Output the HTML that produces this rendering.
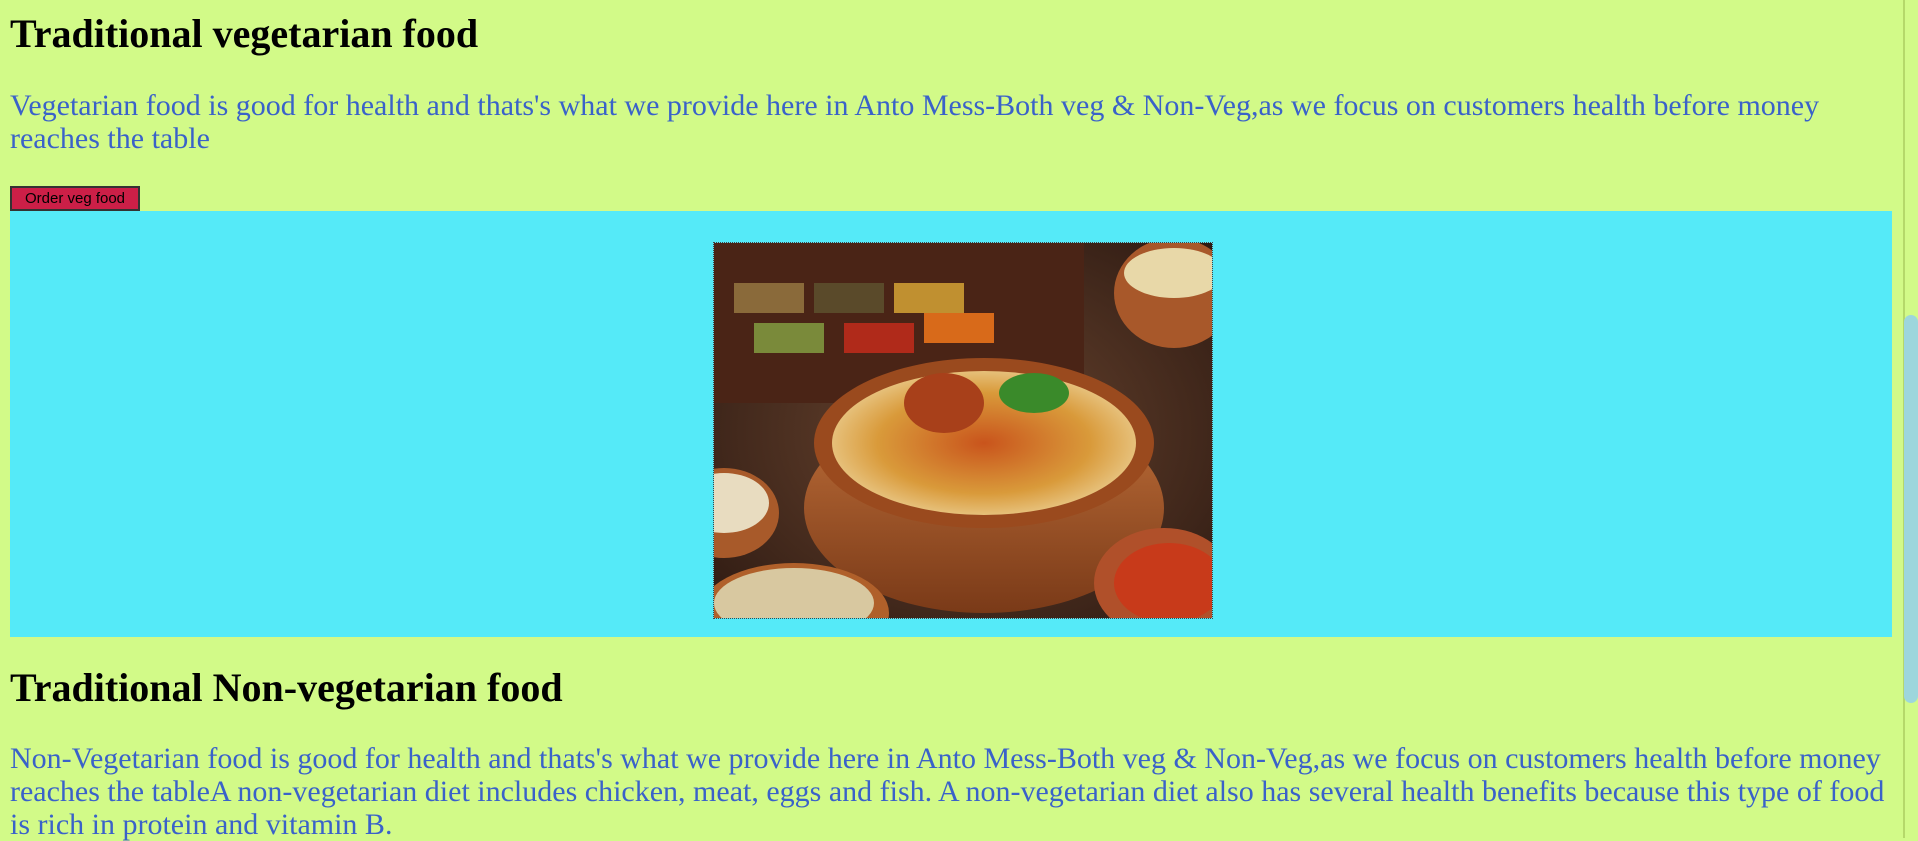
<!DOCTYPE html>
<html><head><meta charset="utf-8"><style>
html,body{margin:0;padding:0;}
body{background:#d2fa88;width:1918px;height:838px;overflow:hidden;position:relative;font-family:"Liberation Serif",serif;}
.wrap{position:absolute;left:10px;top:0;width:1882px;}
h1{font-size:40px;line-height:46px;margin:0;font-weight:bold;color:#000;}
p{font-size:30px;line-height:33px;color:#3a62c9;margin:0;}
button{display:block;margin:31px 0 0;height:25px;width:130px;padding:0;background:#cc1f47;border:2px solid #333;font-family:"Liberation Sans",sans-serif;font-size:15px;color:#000;}
.box{background:#55eaf8;height:426px;position:relative;}
.img{position:absolute;left:703px;top:31px;width:500px;height:377px;border:1px dotted #444;box-sizing:border-box;overflow:hidden;}
.sb{position:absolute;left:1903px;top:0;width:15px;height:838px;background:#d2fa88;border-left:2px solid #b5d86a;box-sizing:border-box;}
.th{position:absolute;left:1904px;top:315px;width:14px;height:388px;background:#9dd6dc;border-radius:7px;}
</style></head><body>
<div class="wrap">
<h1 style="margin-top:11px">Traditional vegetarian food</h1>
<p style="margin-top:32px">Vegetarian food is good for health and thats's what we provide here in Anto Mess-Both veg &amp; Non-Veg,as we focus on customers health before money reaches the table</p>
<button>Order veg food</button>
<div class="box"><div class="img">
<svg width="500" height="377" viewBox="0 0 500 377">
<defs><radialGradient id="bg" cx="0.5" cy="0.5" r="0.7"><stop offset="0" stop-color="#6b4630"/><stop offset="1" stop-color="#2e1a12"/></radialGradient>
<radialGradient id="rice" cx="0.5" cy="0.5" r="0.5"><stop offset="0" stop-color="#c9541c"/><stop offset="0.7" stop-color="#d99a3a"/><stop offset="1" stop-color="#e6c07a"/></radialGradient>
<linearGradient id="pot" x1="0" y1="0" x2="0" y2="1"><stop offset="0" stop-color="#c0703a"/><stop offset="1" stop-color="#7a3a18"/></linearGradient></defs>
<rect width="500" height="377" fill="url(#bg)"/>
<rect x="0" y="0" width="370" height="160" fill="#4a2416"/>
<rect x="20" y="40" width="70" height="30" fill="#8a6a3a"/><rect x="100" y="40" width="70" height="30" fill="#5a4a2a"/><rect x="180" y="40" width="70" height="30" fill="#c09030"/>
<rect x="40" y="80" width="70" height="30" fill="#7a8a3a"/><rect x="130" y="80" width="70" height="30" fill="#b02a1a"/><rect x="210" y="70" width="70" height="30" fill="#d86a1a"/>
<ellipse cx="460" cy="50" rx="60" ry="55" fill="#a8582a"/><ellipse cx="460" cy="30" rx="50" ry="25" fill="#e8d8a8"/>
<ellipse cx="270" cy="265" rx="180" ry="105" fill="url(#pot)"/>
<ellipse cx="270" cy="200" rx="170" ry="85" fill="#9a4a1e"/>
<ellipse cx="270" cy="200" rx="152" ry="72" fill="url(#rice)"/>
<ellipse cx="230" cy="160" rx="40" ry="30" fill="#a8401a"/><ellipse cx="320" cy="150" rx="35" ry="20" fill="#3a8a2a"/>
<ellipse cx="10" cy="270" rx="55" ry="45" fill="#a85a2a"/><ellipse cx="10" cy="260" rx="45" ry="30" fill="#e8dcc0"/>
<ellipse cx="80" cy="370" rx="95" ry="50" fill="#b0602a"/><ellipse cx="80" cy="360" rx="80" ry="35" fill="#d8c8a0"/>
<ellipse cx="450" cy="340" rx="70" ry="55" fill="#b0502a"/><ellipse cx="455" cy="340" rx="55" ry="40" fill="#c83a1a"/>
</svg></div></div>
<h1 style="margin-top:28px">Traditional Non-vegetarian food</h1>
<p style="margin-top:31px">Non-Vegetarian food is good for health and thats's what we provide here in Anto Mess-Both veg &amp; Non-Veg,as we focus on customers health before money reaches the tableA non-vegetarian diet includes chicken, meat, eggs and fish. A non-vegetarian diet also has several health benefits because this type of food is rich in protein and vitamin B.</p>
</div>
<div class="sb"></div><div class="th"></div>
</body></html>
